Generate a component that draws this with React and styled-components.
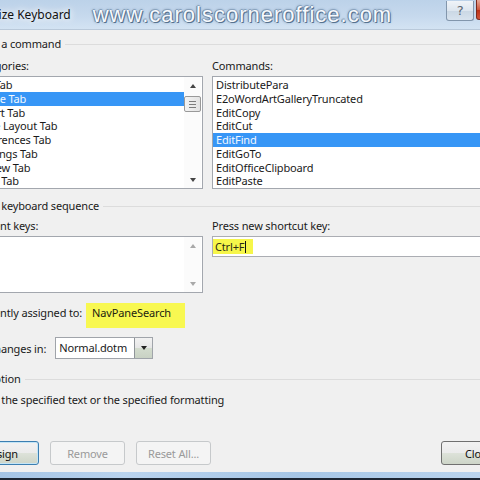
import React from "react";
import styled, { createGlobalStyle, css } from "styled-components";

const Global = createGlobalStyle`
  html, body { margin: 0; padding: 0; width: 480px; height: 480px; overflow: hidden; background: #f0f0f0; }
  body { font-family: "Noto Sans", "Open Sans", sans-serif; font-size: 11px; letter-spacing: -0.15px; color: #1a1a1a; }
  #root { width: 480px; height: 480px; overflow: hidden; }
  * { box-sizing: border-box; }
`;

const Window = styled.div`
  width: 575px;
  height: 480px;
  margin-left: -48px;
  display: flex;
  flex-direction: column;
  background: #f0f0f0;
`;

const TitleBar = styled.div`
  height: 30px;
  flex: none;
  display: flex;
  align-items: center;
  padding: 0 8px 0 3px;
  background: linear-gradient(180deg, #bcd2e9 0%, #c6d9ed 55%, #d3e3f3 100%);
  border-bottom: 1px solid #b9c9da;
`;

const Title = styled.span`
  font-size: 12px;
  letter-spacing: 0;
  color: #111;
  text-shadow: 0 0 6px #ffffff, 0 0 10px #ffffff;
  white-space: nowrap;
`;

const Watermark = styled.span`
  margin-left: 22px;
  font-family: "Liberation Sans", Arial, sans-serif;
  font-size: 22px;
  letter-spacing: 1px;
  color: #f6f9fd;
  white-space: nowrap;
  text-shadow: 1px 1px 0 #56728f, -1px 0 0 #6a86a4, 0 -1px 0 #8aa3bd, 0 0 3px #44678e;
`;

const HelpButton = styled.div`
  margin-left: auto;
  align-self: flex-start;
  margin-top: 1px;
  width: 28px;
  height: 20px;
  border: 1px solid #8296ac;
  border-top: none;
  border-radius: 0 0 3px 3px;
  background: linear-gradient(180deg, #f0f4f8 0%, #dde6ef 50%, #cad7e4 51%, #d8e3ee 100%);
  display: flex;
  align-items: center;
  justify-content: center;
  font-family: "DejaVu Sans", sans-serif;
  font-size: 13px;
  color: #5c6670;
`;

const CloseButton = styled.div`
  margin-left: 2px;
  align-self: flex-start;
  width: 43px;
  height: 20px;
  border: 1px solid #7a2a1e;
  border-top: none;
  border-radius: 0 0 3px 3px;
  background: linear-gradient(180deg, #e9a898 0%, #cf5a41 50%, #bb2f14 51%, #d0533a 100%);
`;

const Body = styled.div`
  flex: 1;
  padding: 7px 11px 0 7px;
  display: flex;
  flex-direction: column;
`;

const GroupHeader = styled.div`
  display: flex;
  align-items: center;
  height: 14px;
  line-height: 14px;
  margin: ${(p) => p.$mt || 0}px 0 0 4px;
  white-space: nowrap;
  &::after {
    content: "";
    flex: 1;
    height: 1px;
    margin-left: 4px;
    background: #dcdcdc;
  }
`;

const TwoCol = styled.div`
  display: grid;
  grid-template-columns: 231px 1fr;
  column-gap: 9px;
  margin-left: 13px;
  margin-top: ${(p) => p.$mt}px;
  align-items: start;
`;

const Field = styled.div`
  display: flex;
  flex-direction: column;
  min-width: 0;
`;

const Label = styled.div`
  height: 14px;
  line-height: 14px;
  margin-bottom: 3px;
  white-space: nowrap;
`;

const ListBox = styled.div`
  height: ${(p) => p.$h}px;
  margin-left: ${(p) => p.$outdent || 0}px;
  border: 1px solid #a3a7ae;
  background: #fff;
  display: flex;
  overflow: hidden;
`;

const Items = styled.div`
  flex: 1;
  min-width: 0;
  padding-top: 1px;
`;

const Item = styled.div`
  height: 13.75px;
  line-height: 13.75px;
  padding-left: 3px;
  white-space: nowrap;
  ${(p) =>
    p.$selected &&
    css`
      background: #3796f6;
      color: #f4f8ff;
    `}
`;

const ScrollBar = styled.div`
  width: 17px;
  flex: none;
  display: flex;
  flex-direction: column;
  background: #fbfbfb;
  margin-right: 1px;
`;

const ArrowBtn = styled.div`
  height: 17px;
  flex: none;
  display: flex;
  align-items: center;
  justify-content: center;
  margin-top: ${(p) => (p.$down ? "auto" : "0")};
  &::before {
    content: "";
    border-left: 3.5px solid transparent;
    border-right: 3.5px solid transparent;
    ${(p) =>
      p.$down
        ? css`border-top: 4px solid ${p.$disabled ? "#a9a9a9" : "#444"};`
        : css`border-bottom: 4px solid ${p.$disabled ? "#a9a9a9" : "#444"};`}
  }
`;

const Thumb = styled.div`
  height: 16px;
  margin: 2px 0 0 0;
  border: 1px solid #999;
  border-radius: 2px;
  background: linear-gradient(90deg, #f3f3f3, #e3e3e3);
  display: flex;
  flex-direction: column;
  align-items: center;
  justify-content: center;
  gap: 2px;
  & > i {
    display: block;
    width: 7px;
    height: 1px;
    background: #7d7d7d;
  }
`;

const KeyInput = styled.div`
  height: 21px;
  border: 1px solid #abadb3;
  background: #fff;
  padding-top: 2px;
  display: flex;
  align-items: flex-start;
`;

const Marker = styled.span`
  display: inline-flex;
  align-items: center;
  height: 15px;
  padding: 0 7px 0 2px;
  background: #f6f64a;
  color: #2a2a12;
  white-space: nowrap;
`;

const Caret = styled.span`
  display: inline-block;
  width: 1px;
  height: 12px;
  background: #111;
  margin-left: 1px;
`;

const AssignedRow = styled.div`
  display: flex;
  align-items: flex-start;
  margin: 10px 0 0 13px;
  white-space: nowrap;
`;

const AssignedLabel = styled.span`
  line-height: 14px;
  margin-top: 3px;
`;

const AssignedValue = styled.span`
  margin-left: 4px;
  width: 99px;
  height: 25px;
  padding: 3px 0 0 6px;
  line-height: 14px;
  background: #f8f851;
  color: #22220f;
`;

const SaveRow = styled.div`
  display: flex;
  align-items: center;
  margin: 9px 0 0 4px;
  white-space: nowrap;
`;

const Select = styled.div`
  margin-left: 9px;
  width: 98px;
  height: 22px;
  border: 1px solid #a0a4aa;
  background: #fff;
  display: flex;
`;

const SelectText = styled.span`
  flex: 1;
  padding-left: 3px;
  line-height: 20px;
`;

const SelectButton = styled.span`
  width: 18px;
  border-left: 1px solid #8f9499;
  background: linear-gradient(180deg, #f2f2f2 0%, #e6e6e6 50%, #d3dcce 51%, #c9d2c4 100%);
  display: flex;
  align-items: center;
  justify-content: center;
  &::before {
    content: "";
    border-left: 3.5px solid transparent;
    border-right: 3.5px solid transparent;
    border-top: 4px solid #222;
  }
`;

const Description = styled.div`
  margin: 7px 0 0 13px;
  line-height: 14px;
  white-space: nowrap;
`;

const ButtonRow = styled.div`
  display: flex;
  gap: 11px;
  margin: 34px 0 0 5px;
`;

const Button = styled.div`
  width: 75px;
  height: 24px;
  flex: none;
  border-radius: 3px;
  display: flex;
  align-items: center;
  justify-content: center;
  white-space: nowrap;
  border: 1px solid #707070;
  background: linear-gradient(180deg, #f2f2f2 0%, #ebebeb 50%, #dde2d9 51%, #cdd5c8 100%);
  color: #111;
  ${(p) =>
    p.$focused &&
    css`
      border-color: #3c7fb1;
      box-shadow: inset 0 0 0 1px #c4e5f6;
    `}
  ${(p) =>
    p.$disabled &&
    css`
      border-color: #c6c9cb;
      background: #f4f4f4;
      color: #9a9a9a;
    `}
  ${(p) => p.$right && css`margin-left: auto;`}
`;

const BottomFrame = styled.div`
  height: 8px;
  flex: none;
  background: linear-gradient(90deg, #9dbfe2 0%, #b9d3ee 30%, #a6c6e6 60%, #c0d8f0 100%);
  border-bottom: 2px solid #1d2633;
`;

const categories = [
  "File Tab",
  "Home Tab",
  "Insert Tab",
  "Page Layout Tab",
  "References Tab",
  "Mailings Tab",
  "Review Tab",
  "View Tab",
];

const commands = [
  "DistributePara",
  "E2oWordArtGalleryTruncated",
  "EditCopy",
  "EditCut",
  "EditFind",
  "EditGoTo",
  "EditOfficeClipboard",
  "EditPaste",
];

export default function App() {
  return (
    <>
      <Global />
      <Window>
        <TitleBar>
          <Title>Customize Keyboard</Title>
          <Watermark>www.carolscorneroffice.com</Watermark>
          <HelpButton>?</HelpButton>
          <CloseButton />
        </TitleBar>
        <Body>
          <GroupHeader>Specify a command</GroupHeader>
          <TwoCol $mt={8}>
            <Field>
              <Label>Categories:</Label>
              <ListBox $h={113} $outdent={-1}>
                <Items>
                  {categories.map((c) => (
                    <Item key={c} $selected={c === "Home Tab"}>
                      {c}
                    </Item>
                  ))}
                </Items>
                <ScrollBar>
                  <ArrowBtn />
                  <Thumb>
                    <i />
                    <i />
                    <i />
                  </Thumb>
                  <ArrowBtn $down />
                </ScrollBar>
              </ListBox>
            </Field>
            <Field>
              <Label>Commands:</Label>
              <ListBox $h={113}>
                <Items>
                  {commands.map((c) => (
                    <Item key={c} $selected={c === "EditFind"}>
                      {c}
                    </Item>
                  ))}
                </Items>
              </ListBox>
            </Field>
          </TwoCol>
          <GroupHeader $mt={10}>Specify keyboard sequence</GroupHeader>
          <TwoCol $mt={6}>
            <Field>
              <Label>Current keys:</Label>
              <ListBox $h={57}>
                <Items />
                <ScrollBar>
                  <ArrowBtn $disabled />
                  <ArrowBtn $down $disabled />
                </ScrollBar>
              </ListBox>
            </Field>
            <Field>
              <Label>Press new shortcut key:</Label>
              <KeyInput>
                <Marker>
                  Ctrl+F
                  <Caret />
                </Marker>
              </KeyInput>
            </Field>
          </TwoCol>
          <AssignedRow>
            <AssignedLabel>Currently assigned to:</AssignedLabel>
            <AssignedValue>NavPaneSearch</AssignedValue>
          </AssignedRow>
          <SaveRow>
            <span>Save changes in:</span>
            <Select>
              <SelectText>Normal.dotm</SelectText>
              <SelectButton />
            </Select>
          </SaveRow>
          <GroupHeader $mt={13}>Description</GroupHeader>
          <Description>Finds the specified text or the specified formatting</Description>
          <ButtonRow>
            <Button $focused>Assign</Button>
            <Button $disabled>Remove</Button>
            <Button $disabled>Reset All...</Button>
            <Button $right>Close</Button>
          </ButtonRow>
        </Body>
        <BottomFrame />
      </Window>
    </>
  );
}
